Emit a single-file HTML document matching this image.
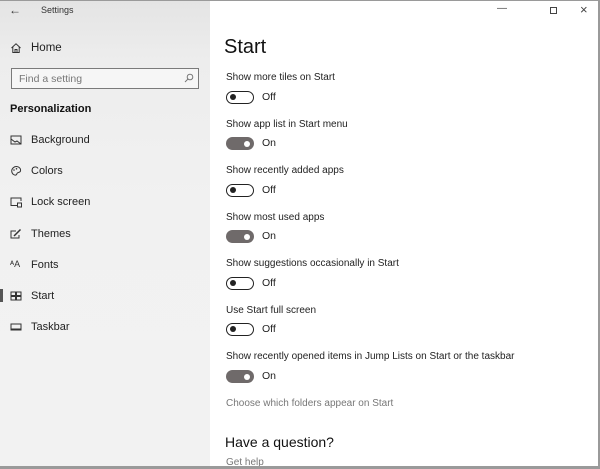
<!DOCTYPE html>
<html><head><style>
*{margin:0;padding:0;box-sizing:border-box}
body{width:600px;height:469px;position:relative;overflow:hidden;background:#fff;font-family:"Liberation Sans",sans-serif;color:#1a1a1a}
.side{position:absolute;left:0;top:0;width:210px;height:469px;background:linear-gradient(180deg,#e4e4e4 0,#ededed 60px,#f1f1f1 200px,#f2f2f2)}
.t{position:absolute;white-space:nowrap}
.frame{position:absolute;left:0;top:0;width:600px;height:469px;border-top:1px solid #9a9a9a;border-right:2px solid #9a9a9a;border-bottom:3px solid #9a9a9a;pointer-events:none}
.nav{position:absolute;left:31px;font-size:11px;color:#222}
.ic{position:absolute;left:10px;width:12px;height:12px}
.lab{position:absolute;left:226px;font-size:10px;color:#222}
.tg{position:absolute;left:226px;width:28px;height:13px;border-radius:7px}
.off{border:1.6px solid #222;background:#fff}
.off:after{content:"";position:absolute;left:3px;top:2.2px;width:6px;height:6px;border-radius:50%;background:#222}
.on{background:#6f6a6a}
.on:after{content:"";position:absolute;right:4px;top:3.5px;width:6px;height:6px;border-radius:50%;background:#fff}
.st{position:absolute;left:262px;font-size:10.5px;color:#222}
</style></head><body>
<div class="side"></div>
<div class="t" style="left:9px;top:3px;font-size:12px;color:#333">&#8592;</div>
<div class="t" style="left:41px;top:5px;font-size:9px;color:#333">Settings</div>
<svg class="ic" style="top:42px" viewBox="0 0 12 12"><path d="M1.5 6 L6 1.8 L10.5 6 M2.8 5 V10.5 H9.2 V5 M5 10.5 V7.5 H7 V10.5" fill="none" stroke="#333" stroke-width="1"/></svg>
<div class="nav" style="top:42px;font-size:11.5px">Home</div>
<div style="position:absolute;left:11px;top:68px;width:188px;height:21px;border:1.5px solid #7a7a7a;background:#f6f6f6"></div>
<div class="t" style="left:19px;top:73px;font-size:10.5px;color:#777">Find a setting</div>
<svg style="position:absolute;left:184px;top:73px;width:10px;height:10px" viewBox="0 0 10 10"><circle cx="6" cy="4" r="2.8" fill="none" stroke="#777"/><path d="M4 6 L1 9" stroke="#777"/></svg>
<div class="t" style="left:10px;top:103px;font-size:11px;font-weight:bold;color:#111">Personalization</div>
<svg class="ic" style="top:134px" viewBox="0 0 12 12"><rect x="1" y="2" width="10" height="8" fill="none" stroke="#333"/><path d="M1 5 L5 8 L7 7 L11 10" fill="none" stroke="#333"/></svg>
<div class="nav" style="top:134px">Background</div>
<svg class="ic" style="top:165px" viewBox="0 0 12 12"><path d="M6 1.5 C9 1.5 11 3.5 10.5 6 C10 8 7.5 7 7 8.5 C6.5 10.5 5 10.5 3.5 9.5 C1.5 8 1 5 3 3 C4 2 5 1.5 6 1.5Z" fill="none" stroke="#333"/><circle cx="4" cy="5" r=".8" fill="#333"/><circle cx="6.5" cy="3.8" r=".8" fill="#333"/></svg>
<div class="nav" style="top:165px">Colors</div>
<svg class="ic" style="top:196px" viewBox="0 0 12 12"><path d="M7 9.5 H1 V2 H11 V5" fill="none" stroke="#333"/><rect x="7.5" y="7" width="4" height="4" fill="none" stroke="#333"/></svg>
<div class="nav" style="top:196px">Lock screen</div>
<svg class="ic" style="top:228px" viewBox="0 0 12 12"><path d="M6 3 H1 V10 H9 V7" fill="none" stroke="#333"/><path d="M4 8 L10.5 1.5" stroke="#333" stroke-width="1.5"/></svg>
<div class="nav" style="top:228px">Themes</div>
<div class="t" style="left:10px;top:259px;font-size:9px;color:#333">ᴬA</div>
<div class="nav" style="top:259px">Fonts</div>
<div style="position:absolute;left:0;top:289px;width:3px;height:13px;background:#555"></div>
<svg class="ic" style="top:290px" viewBox="0 0 12 12"><rect x="1" y="2" width="4.5" height="3.5" fill="none" stroke="#333"/><rect x="6.5" y="2" width="4.5" height="3.5" fill="none" stroke="#333"/><rect x="1" y="6.5" width="4.5" height="3.5" fill="none" stroke="#333"/><rect x="6.5" y="6.5" width="4.5" height="3.5" fill="none" stroke="#333"/></svg>
<div class="nav" style="top:290px">Start</div>
<svg class="ic" style="top:321px" viewBox="0 0 12 12"><rect x="1" y="3" width="10" height="6" fill="none" stroke="#333"/><path d="M1 8 H11" stroke="#333"/></svg>
<div class="nav" style="top:321px">Taskbar</div>

<div class="t" style="left:497px;top:3px;font-size:10px;color:#444">&#8212;</div>
<div style="position:absolute;left:550px;top:7px;width:7px;height:7px;border:1px solid #444"></div>
<div class="t" style="left:580px;top:2px;font-size:13px;color:#444">&#215;</div>

<div class="t" style="left:224px;top:36px;font-size:20px;color:#111">Start</div>
<div class="lab" style="top:72px">Show more tiles on Start</div>
<div class="tg off" style="top:91px"></div><div class="st" style="top:91px">Off</div>
<div class="lab" style="top:119px">Show app list in Start menu</div>
<div class="tg on" style="top:137px"></div><div class="st" style="top:137px">On</div>
<div class="lab" style="top:165px">Show recently added apps</div>
<div class="tg off" style="top:184px"></div><div class="st" style="top:184px">Off</div>
<div class="lab" style="top:212px">Show most used apps</div>
<div class="tg on" style="top:230px"></div><div class="st" style="top:230px">On</div>
<div class="lab" style="top:258px">Show suggestions occasionally in Start</div>
<div class="tg off" style="top:277px"></div><div class="st" style="top:277px">Off</div>
<div class="lab" style="top:305px">Use Start full screen</div>
<div class="tg off" style="top:323px"></div><div class="st" style="top:323px">Off</div>
<div class="lab" style="top:351px">Show recently opened items in Jump Lists on Start or the taskbar</div>
<div class="tg on" style="top:370px"></div><div class="st" style="top:370px">On</div>
<div class="lab" style="top:398px;color:#777">Choose which folders appear on Start</div>
<div class="t" style="left:225px;top:434px;font-size:14px;color:#111">Have a question?</div>
<div class="lab" style="top:457px;color:#777">Get help</div>
<div class="frame"></div>
</body></html>
